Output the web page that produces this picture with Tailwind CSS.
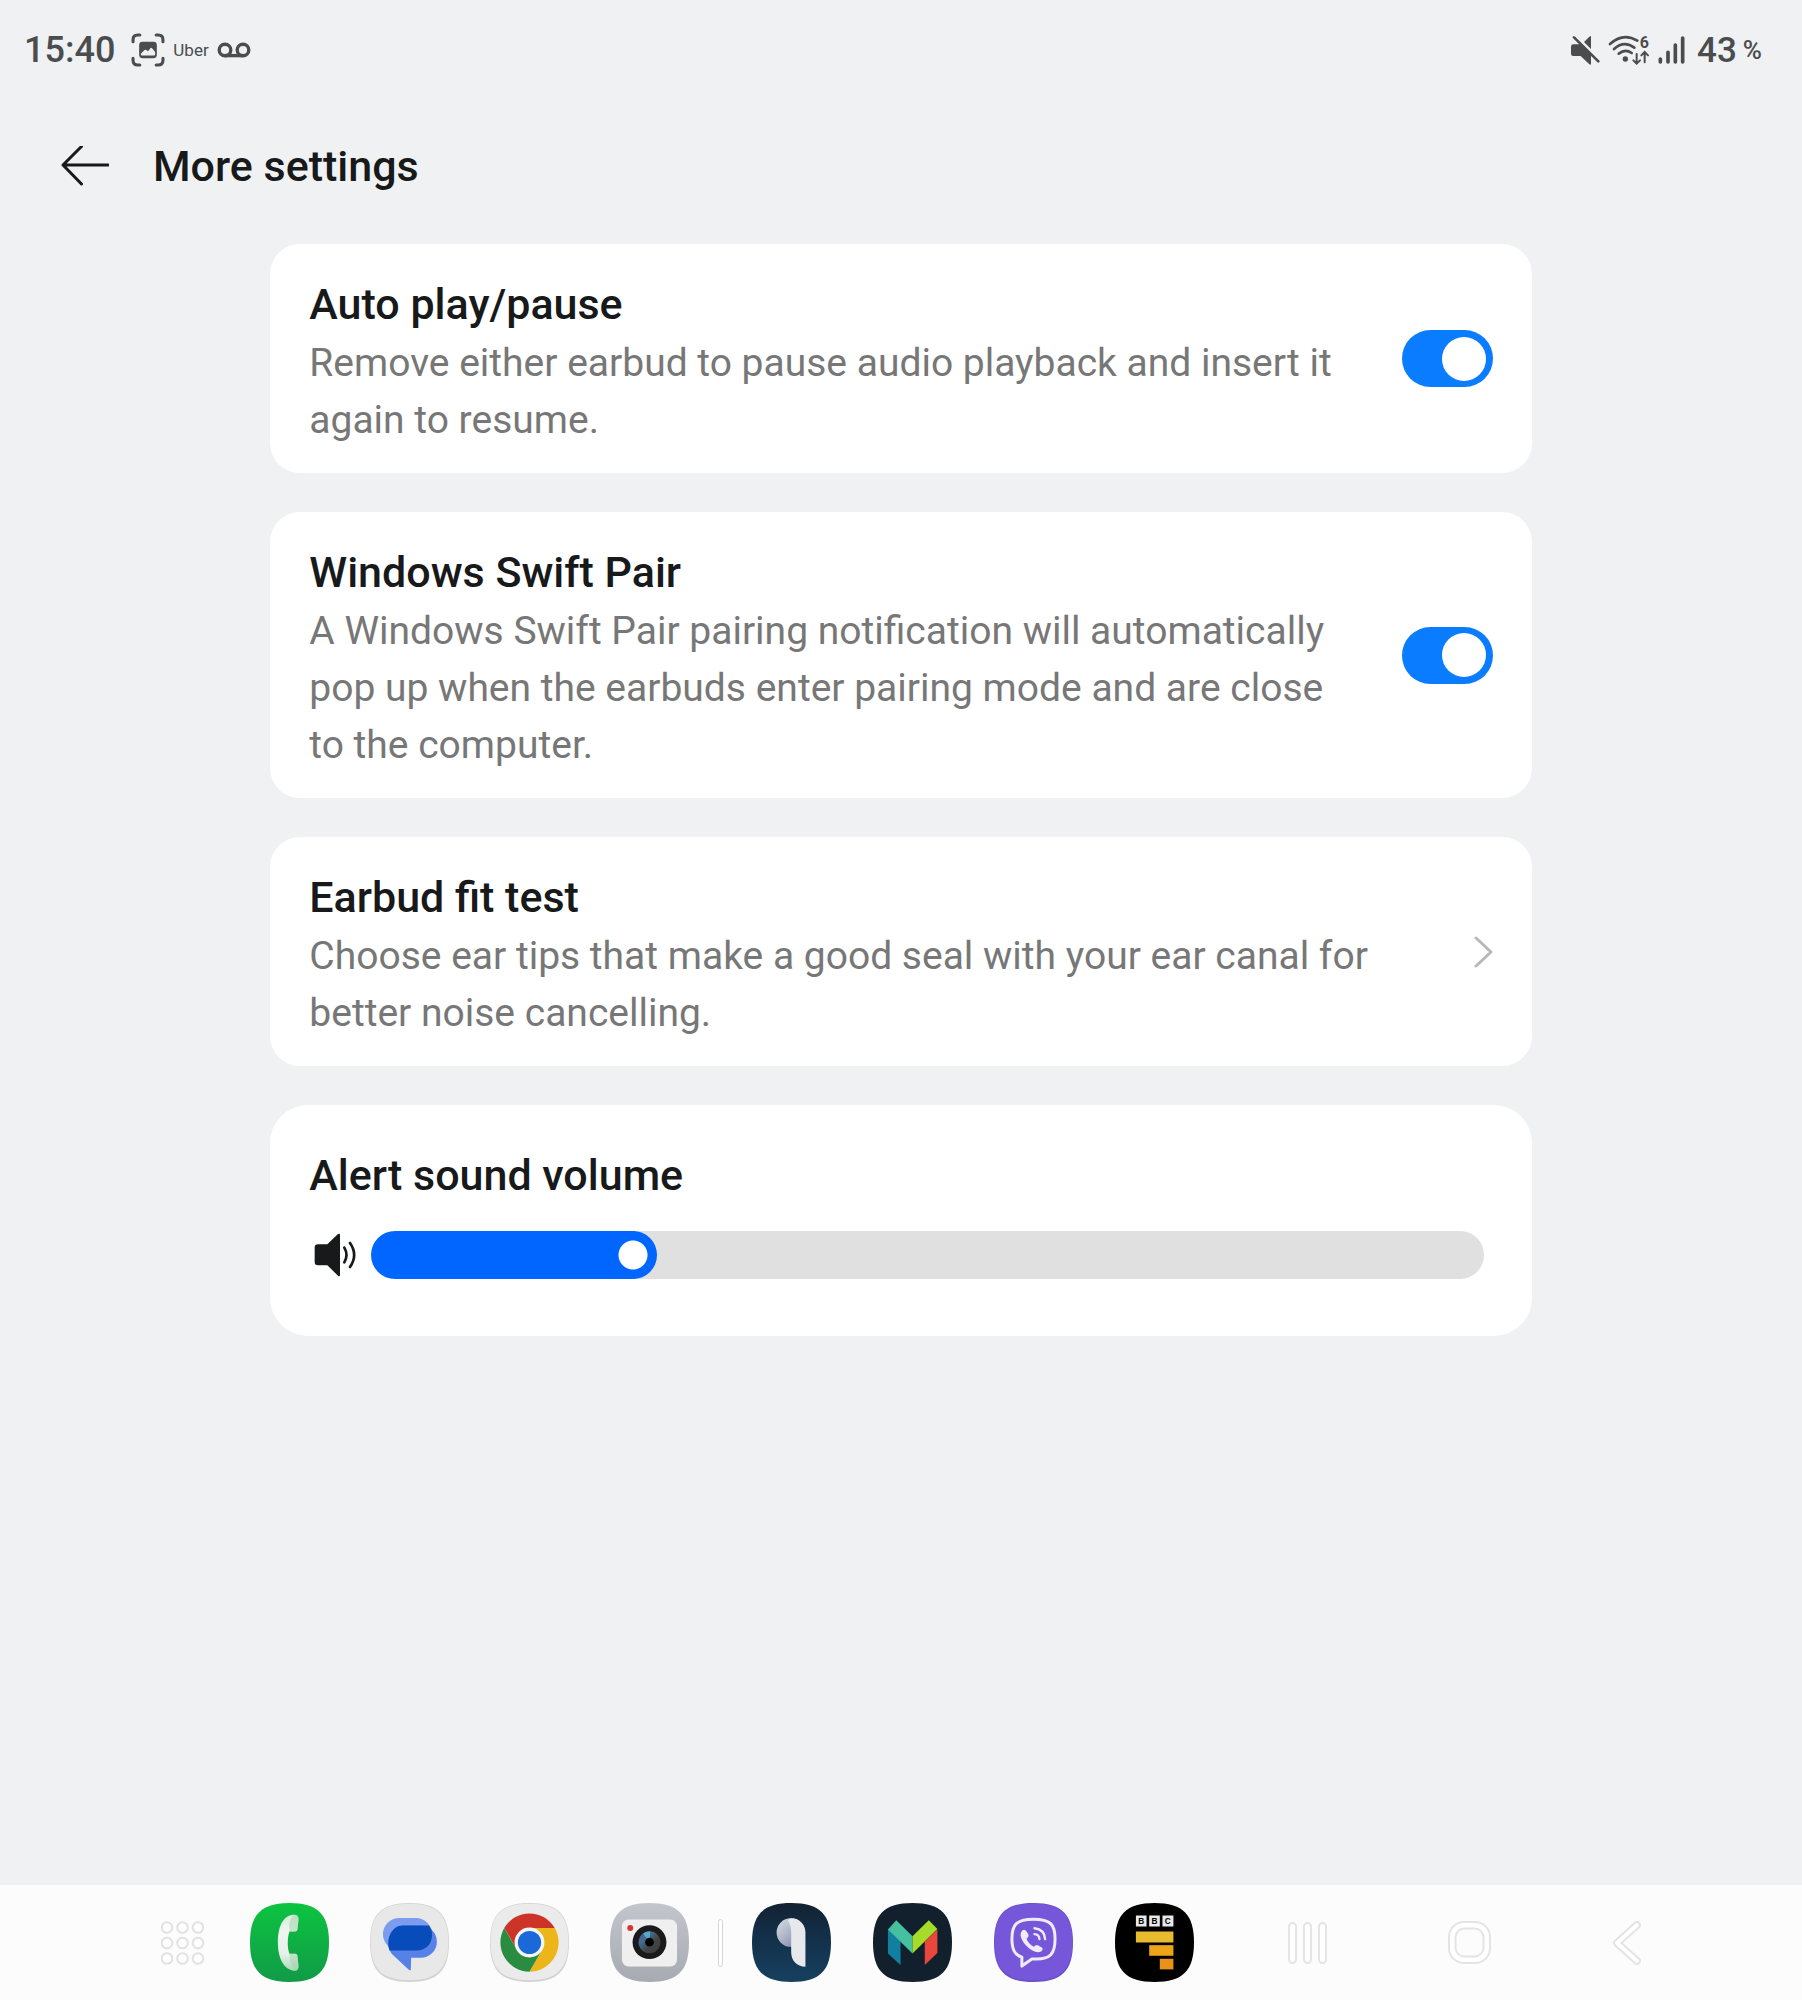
<!DOCTYPE html>
<html lang="en">
<head>
<meta charset="utf-8">
<meta name="viewport" content="width=device-width, initial-scale=1">
<title>More settings</title>
<script src="https://cdn.jsdelivr.net/npm/@tailwindcss/browser@4"></script>
</head>
<body class="flex min-h-screen flex-col bg-[#eff1f3] font-[Roboto,sans-serif] text-[#17191a]">

<!-- Status bar -->
<div class="flex h-[100px] items-center justify-between pr-10 pl-6 text-[#4a4c4d]">
  <div class="flex items-center">
    <span class="text-[36px] font-medium leading-none">15:40</span>
    <svg class="ml-4 size-[34px]" viewBox="0 0 100 100" fill="none" stroke="currentColor" stroke-width="9" stroke-linecap="round">
      <path d="M6 26V20Q6 6 20 6H26M74 6H80Q94 6 94 20V26M94 74V80Q94 94 80 94H74M26 94H20Q6 94 6 80V74"/>
      <path fill="currentColor" stroke="none" fill-rule="evenodd" d="M34 26H66Q76 26 76 36V64Q76 74 66 74H34Q24 74 24 64V36Q24 26 34 26ZM29 63Q29 66 32 66H68Q71 66 71 63V56L62 45Q59 42 56 46L50 54L45 50Q42 48 39 51L29 61Z"/>
    </svg>
    <span class="ml-2 text-[17px] leading-none">Uber</span>
    <svg class="ml-2 h-4 w-[34px]" viewBox="0 0 34 16" fill="none" stroke="currentColor" stroke-width="3.4">
      <circle cx="8" cy="8" r="5.8"/><circle cx="26" cy="8" r="5.8"/><path d="M8 13.6H26"/>
    </svg>
  </div>
  <div class="flex items-center">
    <svg class="size-[30px]" viewBox="0 0 90 90" fill="currentColor">
      <path d="M10 28H34L63 56V87Q62 91 58 88L32 63H10Q3 63 3 56V35Q3 28 10 28ZM42 21L58 5Q63 1 63 6V42Z"/>
      <path d="M12 7L85 79" fill="none" stroke="currentColor" stroke-width="8" stroke-linecap="round"/>
    </svg>
    <svg class="ml-2 h-[30px] w-[42px] overflow-visible" viewBox="0 0 126 90" fill="none" stroke="currentColor" stroke-width="8" stroke-linecap="round">
      <path d="M6 27Q45 -9 88 17M18 42Q48 15 79 38M32 56Q52 40 71 54"/>
      <circle cx="52" cy="72" r="8" fill="currentColor" stroke="none"/>
      <path stroke-width="6" d="M86 57V85M76 76L86 86L96 76M110 82V52M100 61L110 51L120 61"/>
      <text x="95" y="38" fill="currentColor" stroke="none" font-family="Roboto, sans-serif" font-weight="700" font-size="48">6</text>
    </svg>
    <svg class="ml-2 h-[30px] w-[27px]" viewBox="0 0 81 90" stroke="currentColor" stroke-width="11" stroke-linecap="round">
      <path d="M7 72V81M30 52V81M52 30V81M74 9V81"/>
    </svg>
    <span class="ml-3 text-[35px] font-medium leading-none">43</span>
    <span class="ml-1.5 text-[26px] font-medium leading-none">%</span>
  </div>
</div>

<!-- Page header -->
<header class="flex h-[132px] items-center gap-11 px-[61px]">
  <button type="button" aria-label="Back">
    <svg class="h-10 w-12" viewBox="0 0 48 40" fill="none" stroke="currentColor" stroke-width="3" stroke-linecap="round" stroke-linejoin="round"><path d="M47 19H2M20.500 .5L2 19L20.500 38"/></svg>
  </button>
  <h1 class="text-[43px] font-medium leading-[56px]">More settings</h1>
</header>

<!-- Settings -->
<main class="mx-auto mt-3 flex w-[70%] flex-1 flex-col gap-[39px] pb-10">
  <label class="flex items-center justify-between gap-12 rounded-[30px] bg-white px-[39px]">
    <span class="block pt-8 pb-6">
      <span class="block text-[43px] font-medium leading-[56px]">Auto play/pause</span>
      <span class="mt-[3px] block text-[39px] leading-[57px] text-[#777777]">Remove either earbud to pause audio playback and insert it again to resume.</span>
    </span>
    <input type="checkbox" role="switch" checked class="flex h-[57px] w-[91px] shrink-0 appearance-none items-center justify-start rounded-full bg-[#c4c7ca] px-[7px] before:size-11 before:rounded-full before:bg-white before:content-[''] checked:justify-end checked:bg-[#0a7cff]">
  </label>

  <label class="flex items-center justify-between gap-12 rounded-[30px] bg-white px-[39px]">
    <span class="block pt-8 pb-6">
      <span class="block text-[43px] font-medium leading-[56px]">Windows Swift Pair</span>
      <span class="mt-[3px] block text-[39px] leading-[57px] text-[#777777]">A Windows Swift Pair pairing notification will automatically pop up when the earbuds enter pairing mode and are close to the computer.</span>
    </span>
    <input type="checkbox" role="switch" checked class="flex h-[57px] w-[91px] shrink-0 appearance-none items-center justify-start rounded-full bg-[#c4c7ca] px-[7px] before:size-11 before:rounded-full before:bg-white before:content-[''] checked:justify-end checked:bg-[#0a7cff]">
  </label>

  <a href="#fit-test" class="flex items-center justify-between gap-12 rounded-[30px] bg-white px-[39px]">
    <span class="block pt-8 pb-6">
      <span class="block text-[43px] font-medium leading-[56px]">Earbud fit test</span>
      <span class="mt-[3px] block text-[39px] leading-[57px] text-[#777777]">Choose ear tips that make a good seal with your ear canal for better noise cancelling.</span>
    </span>
    <svg class="h-8 w-5 shrink-0" viewBox="0 0 20 32" fill="none" stroke="#b8b8b8" stroke-width="3" stroke-linecap="round" stroke-linejoin="round"><path d="M3 2L18 16L3 30"/></svg>
  </a>

  <section class="rounded-[38px] bg-white pt-[42px] pr-12 pb-[57px] pl-[39px]">
    <label for="volume" class="block text-[43px] font-medium leading-[56px]">Alert sound volume</label>
    <div class="mt-7 flex items-center">
      <svg class="mr-3 ml-[5px] h-11 w-[45px] shrink-0" viewBox="0 0 135 132" fill="#17191a">
        <path d="M12 34H40L72 3Q78 0 78 6V126Q78 132 72 128L40 97H12Q2 97 2 87V44Q2 34 12 34Z"/>
        <path d="M91 44Q104 66 91 88M108 30Q133 66 108 102" fill="none" stroke="#17191a" stroke-width="8" stroke-linecap="round"/>
      </svg>
      <input id="volume" type="range" min="0" max="100" step="any" value="22.3" class="h-12 min-w-0 flex-1 appearance-none rounded-full bg-[linear-gradient(to_right,#0066ff_23.7%,#e0e0e0_23.7%)] [&::-webkit-slider-thumb]:size-12 [&::-webkit-slider-thumb]:appearance-none [&::-webkit-slider-thumb]:rounded-full [&::-webkit-slider-thumb]:bg-[radial-gradient(circle,#ffffff_14px,#0066ff_15px)]">
    </div>
  </section>
</main>

<!-- Taskbar -->
<nav class="flex h-[115px] items-center justify-between bg-[#fcfcfc] px-[161px]">
  <div class="flex items-center gap-[29px]">
    <div class="flex items-center gap-[41px]">
      <button type="button" aria-label="All apps" class="mr-1">
        <svg class="size-11" viewBox="0 0 44 44" fill="#ffffff" stroke="#e2e2e2" stroke-width="2">
          <circle cx="6" cy="6.500" r="5.300"/><circle cx="21.500" cy="6.500" r="5.300"/><circle cx="37" cy="6.500" r="5.300"/>
          <circle cx="6" cy="22" r="5.300"/><circle cx="21.500" cy="22" r="5.300"/><circle cx="37" cy="22" r="5.300"/>
          <circle cx="6" cy="37.500" r="5.300"/><circle cx="21.500" cy="37.500" r="5.300"/><circle cx="37" cy="37.500" r="5.300"/>
        </svg>
      </button>
      <button type="button" aria-label="Phone">
        <svg class="size-[79px]" viewBox="0 0 238 238">
          <defs>
            <path id="tile" d="M119 0C204 0 238 34 238 119S204 238 119 238 0 204 0 119 34 0 119 0Z"/>
            <linearGradient id="phone" x2="0" y2="1"><stop stop-color="#0cc440"/><stop offset="1" stop-color="#119a48"/></linearGradient>
            <linearGradient id="handset" x2="0" y2="1"><stop stop-color="#d5eeda"/><stop offset=".3" stop-color="#f0f5f1"/><stop offset=".7" stop-color="#e6f0e9"/><stop offset="1" stop-color="#a9dcb9"/></linearGradient>
          </defs>
          <use href="#tile" fill="url(#phone)"/>
          <path fill="url(#handset)" d="M125 36C140 33 147 38 146 50L143 80Q142 86 136 86L119 86C112 105 112 135 119 153L136 153Q142 153 143 159L146 188C147 200 142 206 128 203C95 195 84 155 84 118C84 80 95 42 125 36Z"/>
          <path fill="#9fd2aa" d="M132 37C142 35 147 40 146 50L143 80Q142 86 136 86H119C116 66 120 46 132 37ZM119 153H136Q142 153 143 159L146 188C147 198 143 203 136 203C124 192 119 174 119 153Z" opacity=".5"/>
        </svg>
      </button>
      <button type="button" aria-label="Messages">
        <svg class="size-[79px]" viewBox="0 0 238 238">
          <use href="#tile" fill="#d2d2d2"/>
          <path fill="#e8e8e8" d="M119 2C202 2 236 36 236 117S202 233 119 233 2 200 2 117 36 2 119 2Z"/>
          <rect x="39" y="45" width="148" height="98" rx="49" fill="#7c9cee"/>
          <path fill="#5681e6" d="M101 68H153A48 48 0 0 1 153 165H124L123 200Q122 205 117 201L66 154C40 118 64 68 101 68Z"/>
          <path fill="#084cbb" d="M98 68H178Q187 80 187 94C187 125 168 143 138 143H59C46 110 66 68 98 68Z"/>
        </svg>
      </button>
      <button type="button" aria-label="Browser">
        <svg class="size-[79px]" viewBox="0 0 238 238">
          <use href="#tile" fill="#d2d2d2"/>
          <path fill="#ebebeb" d="M119 2C202 2 236 36 236 117S202 233 119 233 2 200 2 117 36 2 119 2Z"/>
          <path fill="#cd3428" d="M195 75A88 88 0 0 0 43 75L81 141A44 44 0 0 1 119 75Z"/>
          <path fill="#ecb51a" transform="rotate(120 119 119)" d="M195 75A88 88 0 0 0 43 75L81 141A44 44 0 0 1 119 75Z"/>
          <path fill="#2a8c41" transform="rotate(240 119 119)" d="M195 75A88 88 0 0 0 43 75L81 141A44 44 0 0 1 119 75Z"/>
          <circle cx="119" cy="119" r="45" fill="#f5f5f5"/><circle cx="119" cy="119" r="35" fill="#1b68d8"/>
        </svg>
      </button>
      <button type="button" aria-label="Camera">
        <svg class="size-[79px]" viewBox="0 0 238 238">
          <defs>
            <linearGradient id="cam" x2="0" y2="1"><stop stop-color="#c3c6cc"/><stop offset="1" stop-color="#a6aab1"/></linearGradient>
            <linearGradient id="lens" x2="1" y2="1"><stop stop-color="#5a4a8a"/><stop offset=".3" stop-color="#3f6f96"/><stop offset=".6" stop-color="#444444"/><stop offset="1" stop-color="#3a3a3a"/></linearGradient>
          </defs>
          <use href="#tile" fill="url(#cam)"/>
          <rect x="36" y="50" width="166" height="141" rx="20" fill="#efefef"/>
          <circle cx="61" cy="75" r="9" fill="#d8352c"/>
          <circle cx="119" cy="118" r="51" fill="#1a1a1a"/>
          <circle cx="119" cy="118" r="33" fill="url(#lens)"/>
          <path d="M119 118L100 92Q110 84 121 86Z" fill="#58a6c8"/>
          <circle cx="119" cy="118" r="13" fill="#000000"/>
        </svg>
      </button>
    </div>
    <span class="h-12 w-[5px] rounded-full border border-[#d6d6d6] bg-white"></span>
    <div class="flex items-center gap-[42px]">
      <button type="button" aria-label="Earbuds">
        <svg class="size-[79px]" viewBox="0 0 238 238">
          <defs>
            <linearGradient id="bud" x2="0" y2="1"><stop stop-color="#13212f"/><stop offset=".3" stop-color="#122c44"/><stop offset="1" stop-color="#16405f"/></linearGradient>
            <linearGradient id="disc" x2="1" y2="1"><stop stop-color="#d9dde6"/><stop offset=".5" stop-color="#a9b1c4"/><stop offset="1" stop-color="#6f7c98"/></linearGradient>
          </defs>
          <use href="#tile" fill="url(#bud)"/>
          <circle cx="117" cy="89" r="43" fill="url(#disc)"/>
          <path fill="#e6e8ec" d="M118 148V90Q118 68 108 52Q112 46 119 46C143 46 161 65 161 89V192C135 190 118 174 118 148Z"/>
        </svg>
      </button>
      <button type="button" aria-label="Bank">
        <svg class="size-[79px]" viewBox="0 0 238 238">
          <use href="#tile" fill="#12202d"/>
          <path fill="#117f9f" d="M45 78L83 115V187L45 152Z"/>
          <path fill="#45c1a2" d="M70 52L119 100V152L45 80Z"/>
          <path fill="#a5dc2a" d="M168 52L194 78L119 152V100Z"/>
          <path fill="#e9463c" d="M194 80V151L156 187V116Z"/>
        </svg>
      </button>
      <button type="button" aria-label="Calls">
        <svg class="size-[79px]" viewBox="0 0 238 238">
          <use href="#tile" fill="#6b50ca"/>
          <path fill="#7657d9" d="M119 2C202 2 236 36 236 117S202 233 119 233 2 200 2 117 36 2 119 2Z"/>
          <path fill="none" stroke="#f0ebfa" stroke-width="9" stroke-linejoin="round" d="M119 49C170 49 184 65 184 108C184 155 168 169 128 169H114L84 190V163C62 156 54 140 54 108C54 65 68 49 119 49Z"/>
          <path fill="#f0ebfa" d="M84 84Q92 76 98 86L104 96Q106 102 98 108Q104 124 120 132Q126 124 132 127L144 134Q150 139 142 146Q134 150 124 147C102 138 84 118 80 98Q79 90 84 84Z"/>
          <path fill="none" stroke="#f0ebfa" stroke-width="7" stroke-linecap="round" d="M122 76Q153 80 154 109M122 94Q136 95 137 109"/>
        </svg>
      </button>
      <button type="button" aria-label="BBC">
        <svg class="size-[79px]" viewBox="0 0 238 238">
          <use href="#tile" fill="#000000"/>
          <path fill="#e8e8e8" d="M63 38H95V71H63ZM103 38H135V71H103ZM143 38H176V71H143Z"/>
          <g font-family="'Liberation Sans', sans-serif" font-weight="700" font-size="25" text-anchor="middle" fill="#000000"><text x="79" y="64">B</text><text x="119" y="64">B</text><text x="159" y="64">C</text></g>
          <path fill="#e8bb2e" d="M63 86H176V119H63Z"/><path fill="#eba51a" d="M103 127H176V159H103Z"/><path fill="#e8911b" d="M135 168H176V200H135Z"/>
        </svg>
      </button>
    </div>
  </div>
  <div class="flex items-center gap-[121px]">
    <button type="button" aria-label="Recent apps">
      <svg class="h-[42px] w-[39px]" viewBox="0 0 39 42" fill="#ffffff" stroke="#e4e4e4" stroke-width="2"><rect x="1" y="1" width="7" height="40" rx="3.500"/><rect x="16" y="1" width="7" height="40" rx="3.500"/><rect x="31" y="1" width="7" height="40" rx="3.500"/></svg>
    </button>
    <button type="button" aria-label="Home">
      <svg class="size-[43px]" viewBox="0 0 43 43" fill="#ffffff" stroke="#e4e4e4" stroke-width="2"><rect x="1" y="1" width="41" height="41" rx="15"/><rect x="7.500" y="7.500" width="28" height="28" rx="9" fill="#fcfcfc"/></svg>
    </button>
    <button type="button" aria-label="Back">
      <svg class="h-[44px] w-[29px]" viewBox="0 0 29 44" fill="none" stroke-linecap="round" stroke-linejoin="round"><path d="M25 4L5 22L25 40" stroke="#e4e4e4" stroke-width="8"/><path d="M25 4L5 22L25 40" stroke="#ffffff" stroke-width="4"/></svg>
    </button>
  </div>
</nav>
</body>
</html>
